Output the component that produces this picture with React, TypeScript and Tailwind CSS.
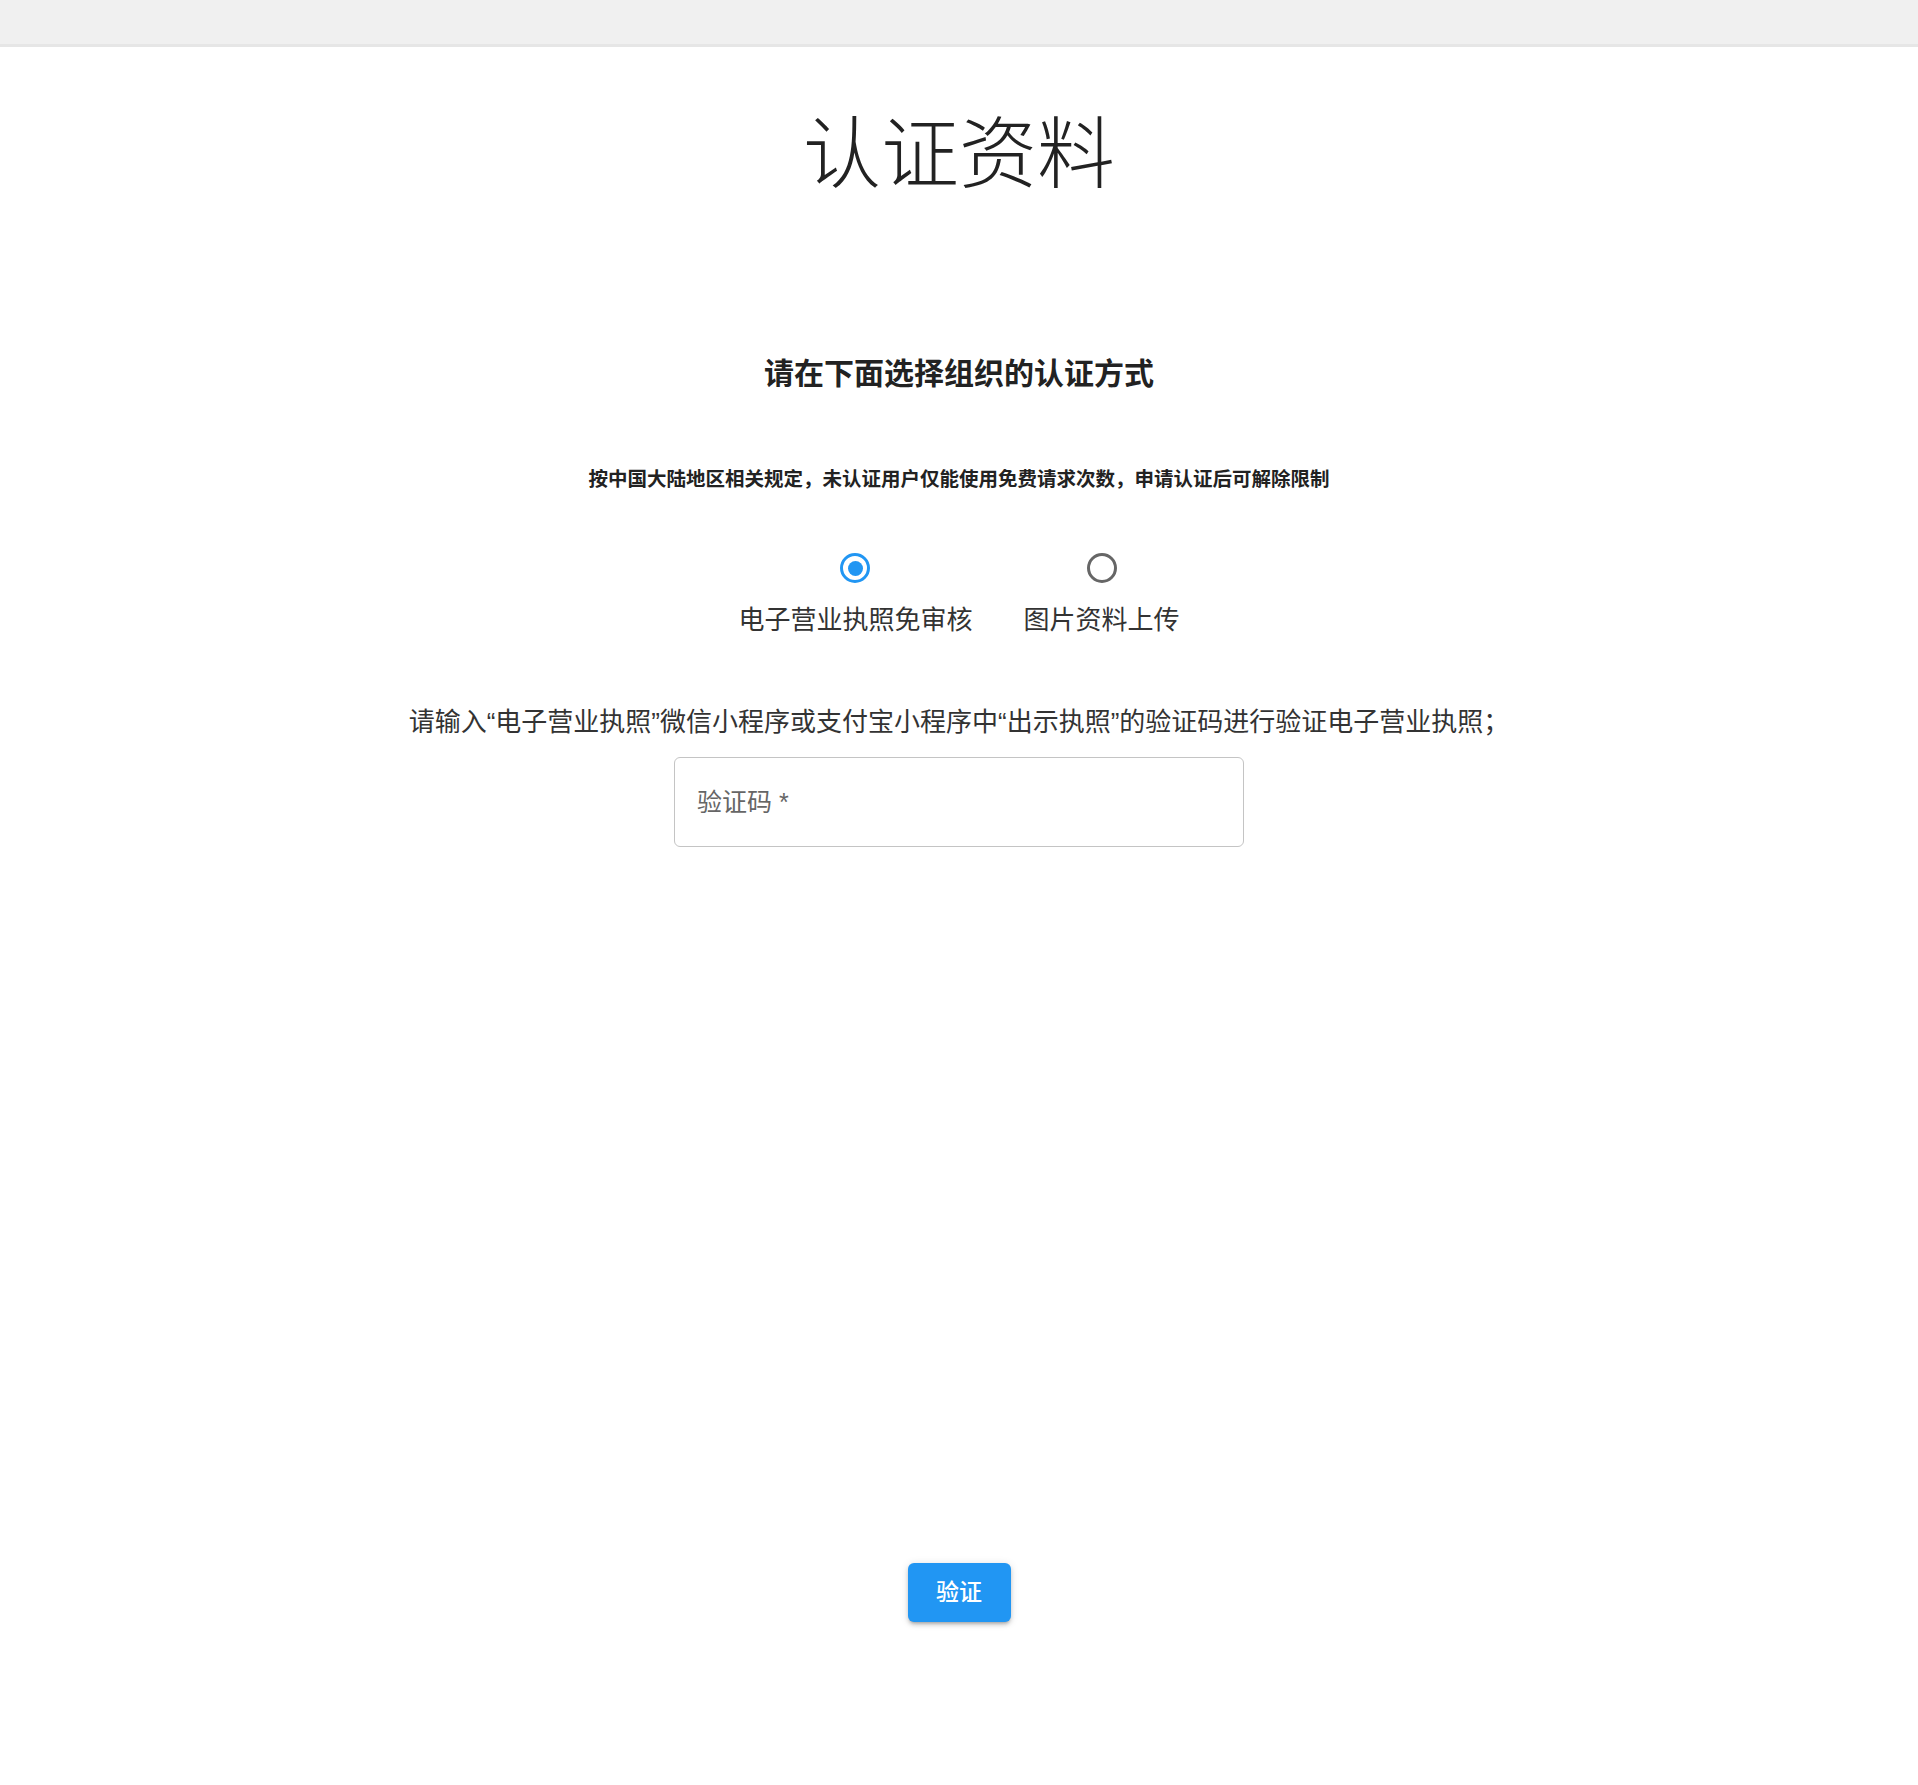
import { useState } from 'react'

export default function App() {
  type Method = 'electronic' | 'upload'
  const [method, setMethod] = useState<Method>('electronic')
  const [code, setCode] = useState('')

  const options: { value: Method; label: string }[] = [
    { value: 'electronic', label: '电子营业执照免审核' },
    { value: 'upload', label: '图片资料上传' },
  ]

  return (
    <div className="min-h-[1785px] w-full bg-white text-[#222] flex flex-col items-center font-['Liberation_Sans','Noto_Sans_CJK_SC',sans-serif]">
      {/* top bar */}
      <div className="w-full h-[47px] bg-[#f0f0f0] border-b-[3px] border-[#e6e6e6]" />

      <h1 className="mt-[60px] text-[78px] leading-[96px] font-light text-[#222]">认证资料</h1>

      <h2 className="mt-[151px] text-[30px] leading-[40px] font-bold text-[#222]">请在下面选择组织的认证方式</h2>

      <p className="mt-[71px] text-[19.5px] leading-[28px] font-bold text-[#222]">
        按中国大陆地区相关规定，未认证用户仅能使用免费请求次数，申请认证后可解除限制
      </p>

      {/* radio options */}
      <div className="mt-[60px] flex gap-[51px]">
        {options.map(o => (
          <label key={o.value} className="flex flex-col items-center cursor-pointer">
            <input
              type="radio"
              name="method"
              className="hidden"
              checked={method === o.value}
              onChange={() => setMethod(o.value)}
            />
            <span
              className={`h-[30px] w-[30px] rounded-full border-[3px] flex items-center justify-center ${method === o.value ? 'border-[#2196f3]' : 'border-[#666]'}`}
            >
              {method === o.value && <span className="h-[15px] w-[15px] rounded-full bg-[#2196f3]" />}
            </span>
            <span className="mt-[19px] text-[26px] leading-[36px] text-[#333]">{o.label}</span>
          </label>
        ))}
      </div>

      {method === 'electronic' && (
        <>
          <p className="mt-[66px] text-[26px] leading-[36px] text-[#333]">
            请输入“电子营业执照”微信小程序或支付宝小程序中“出示执照”的验证码进行验证电子营业执照；
          </p>
          <input
            value={code}
            onChange={e => setCode(e.target.value)}
            placeholder="验证码 *"
            className="mt-[17px] h-[90px] w-[570px] rounded-[6px] border border-[#c4c4c4] px-[22px] text-[25px] text-[#222] placeholder:text-[#666] outline-none focus:border-[#2196f3]"
          />
        </>
      )}

      <button className="mt-[716px] h-[59px] w-[103px] rounded-[6px] bg-[#2196f3] text-white text-[23px] font-medium shadow-[0_3px_3px_-2px_rgba(0,0,0,0.2),0_3px_4px_0_rgba(0,0,0,0.14),0_1px_8px_0_rgba(0,0,0,0.12)]">
        验证
      </button>
    </div>
  )
}
